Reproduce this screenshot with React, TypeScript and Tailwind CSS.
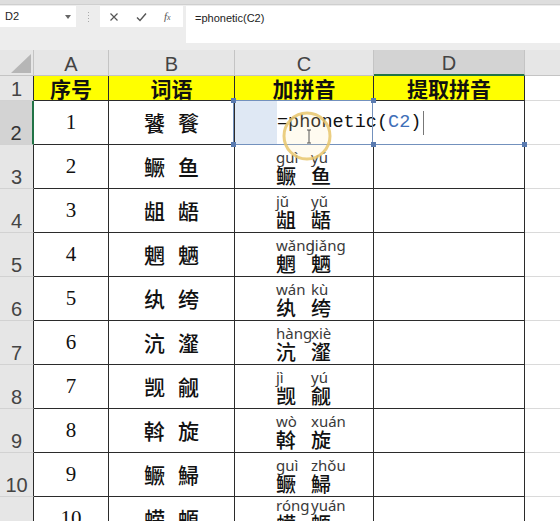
import React from "react";

const rows = [
  { n: "1", w: ["饕", "餮"] },
  { n: "2", w: ["鳜", "鱼"], py: ["guì", "yú"] },
  { n: "3", w: ["龃", "龉"], py: ["jǔ", "yǔ"] },
  { n: "4", w: ["魍", "魉"], py: ["wǎng", "liǎng"] },
  { n: "5", w: ["纨", "绔"], py: ["wán", "kù"] },
  { n: "6", w: ["沆", "瀣"], py: ["hàng", "xiè"] },
  { n: "7", w: ["觊", "觎"], py: ["jì", "yú"] },
  { n: "8", w: ["斡", "旋"], py: ["wò", "xuán"] },
  { n: "9", w: ["鳜", "鯞"], py: ["guì", "zhǒu"] },
  { n: "10", w: ["蝾", "螈"], py: ["róng", "yuán"] },
];

const cjk = "[font-family:'Noto_Sans_CJK_SC',sans-serif]";
const cell = "border-r border-b border-[#2b2b2b]";

function Handle({ className }: { className: string }) {
  return <div className={`absolute w-[5px] h-[5px] bg-[#5a7bb0] ${className}`} />;
}

export default function App() {
  return (
    <div className="relative w-[560px] h-[521px] overflow-hidden bg-white [font-family:'Liberation_Sans',sans-serif]">
      {/* formula bar */}
      <div className="h-[5px] bg-[#dedede] border-b border-[#cfcfcf]" />
      <div className="h-[45px] bg-[#ededed] flex items-start pt-[1px] text-[#222]">
        <div className="w-[76px] h-[21px] bg-white flex items-center justify-between pl-[5px] pr-[5px] text-[11px]">
          <span>D2</span>
          <svg width="6" height="4" viewBox="0 0 6 4">
            <path d="M0 0h6L3 4z" fill="#666" />
          </svg>
        </div>
        <div className="w-[24px] h-[21px] flex flex-col items-center justify-center gap-[2px]">
          <div className="w-px h-px bg-[#aaa]" />
          <div className="w-px h-px bg-[#aaa]" />
          <div className="w-px h-px bg-[#aaa]" />
          <div className="w-px h-px bg-[#aaa]" />
        </div>
        <div className="w-[83px] h-[21px] bg-white flex items-center pl-[9px] gap-[17px]">
          <svg width="10" height="10" viewBox="0 0 10 10">
            <path d="M1.5 1.5l7 7M8.5 1.5l-7 7" stroke="#555" strokeWidth="1.2" />
          </svg>
          <svg width="11" height="10" viewBox="0 0 11 10">
            <path d="M1 5.5l3 3L10 1.5" stroke="#555" strokeWidth="1.4" fill="none" />
          </svg>
          <span className="italic text-[11px] text-[#555] [font-family:'Liberation_Serif',serif]">
            f<span className="text-[8px]">x</span>
          </span>
        </div>
        <div className="ml-[3px] flex-1 h-[37px] bg-white pl-[9px] pt-[4px] text-[11px] text-[#222]">
          =phonetic(C2)
        </div>
      </div>

      {/* sheet */}
      <div className="grid grid-cols-[34px_75px_126px_139px_151px_1fr] grid-rows-[26px_25px_repeat(10,44px)]">
        {/* column headers */}
        <div className="bg-[#e6e6e6] border-r border-b border-[#c4c4c4] flex items-end justify-end pr-[2px] pb-[2px]">
          <svg width="20" height="19" viewBox="0 0 20 19">
            <path d="M20 0V19H0z" fill="#b6b6b6" />
          </svg>
        </div>
        {["A", "B", "C"].map((c) => (
          <div
            key={c}
            className="bg-[#e6e6e6] border-r border-b border-[#c4c4c4] flex items-center justify-center pt-[2px] text-[20px] text-[#444]"
          >
            {c}
          </div>
        ))}
        <div className="bg-[#d3d3d3] border-r border-[#c4c4c4] border-b-2 border-b-[#217346] flex items-center justify-center pt-[2px] text-[20px] text-[#444]">
          D
        </div>
        <div className="bg-[#e6e6e6] border-b border-[#c4c4c4]" />

        {/* row 1 */}
        <div className="bg-[#e6e6e6] border-b border-[#d2d2d2] border-r border-r-[#2b2b2b] flex items-end justify-center text-[20px] leading-[22px] text-[#444]">
          1
        </div>
        {["序号", "词语", "加拼音", "提取拼音"].map((t) => (
          <div
            key={t}
            className={`${cell} bg-[#ffff00] flex items-center justify-center font-bold text-[21px] leading-none text-[#111] ${cjk}`}
          >
            {t}
          </div>
        ))}
        <div className="border-b border-[#dadada]" />

        {rows.map((r, i) => {
          const rowNo = i + 2;
          const selected = rowNo === 2;
          const last = rowNo === 11;
          return (
            <React.Fragment key={r.n}>
              <div
                className={`flex items-end justify-center text-[20px] leading-[22px] border-b border-[#d2d2d2] ${
                  selected
                    ? "bg-[#d3d3d3] border-r-2 border-r-[#217346] text-[#333]"
                    : "bg-[#e6e6e6] border-r border-r-[#2b2b2b] text-[#444]"
                }`}
              >
                {rowNo}
              </div>
              <div
                className={`${cell} flex items-center justify-center text-[21px] text-[#111] [font-family:'Liberation_Serif',serif]`}
              >
                {r.n}
              </div>
              <div
                className={`${cell} flex items-center justify-center gap-[13px] text-[21px] font-medium text-[#111] ${cjk}`}
              >
                <span>{r.w[0]}</span>
                <span>{r.w[1]}</span>
              </div>
              {selected ? (
                <div className="relative col-span-2 flex border-r border-r-[#2b2b2b] border-b border-b-[#7391bd]">
                  <div className="w-[42px] bg-[#dfe8f4]" />
                  <div className="flex items-center text-[18.5px] text-[#111] [font-family:'Liberation_Mono',monospace]">
                    <span>=phonetic(</span>
                    <span className="text-[#3f6fb8]">C2</span>
                    <span>)</span>
                    <span className="ml-[2px] w-px h-[24px] bg-[#777]" />
                  </div>
                  <div className="absolute left-[-2px] top-[-1px] w-[140px] h-[45px] border border-[#7391bd]" />
                  <Handle className="left-[-4px] top-[-3px]" />
                  <Handle className="left-[136px] top-[-3px]" />
                  <Handle className="left-[-4px] top-[41px]" />
                  <Handle className="left-[136px] top-[41px]" />
                  <Handle className="right-[-3px] top-[41px]" />
                </div>
              ) : (
                <>
                  <div
                    className={`${cell} flex justify-center gap-[14px] ${
                      last ? "items-start pt-[0px]" : "items-end pb-[1px]"
                    }`}
                  >
                    {r.w.map((ch, k) => (
                      <div key={k} className="w-[21px] flex flex-col">
                        <span className="whitespace-nowrap text-[15px] leading-[16px] text-[#3a3a3a] [font-family:'Noto_Sans',sans-serif]">
                          {r.py ? r.py[k] : ""}
                        </span>
                        <span className={`text-[20px] leading-[22px] font-medium text-[#111] ${cjk}`}>
                          {ch}
                        </span>
                      </div>
                    ))}
                  </div>
                  <div className={cell} />
                </>
              )}
              <div className="border-b border-[#dadada]" />
            </React.Fragment>
          );
        })}
      </div>

      {/* mouse highlight */}
      <svg
        className="absolute left-[281px] top-[110px]"
        width="52"
        height="52"
        viewBox="0 0 52 52"
      >
        <circle cx="26" cy="26" r="23" fill="rgba(255,235,170,0.18)" stroke="#e8c56c" strokeOpacity="0.85" strokeWidth="3" />
        <path d="M26 20h4M28 20v13M26 33h4" stroke="#555" strokeWidth="1" fill="none" />
      </svg>
    </div>
  );
}
